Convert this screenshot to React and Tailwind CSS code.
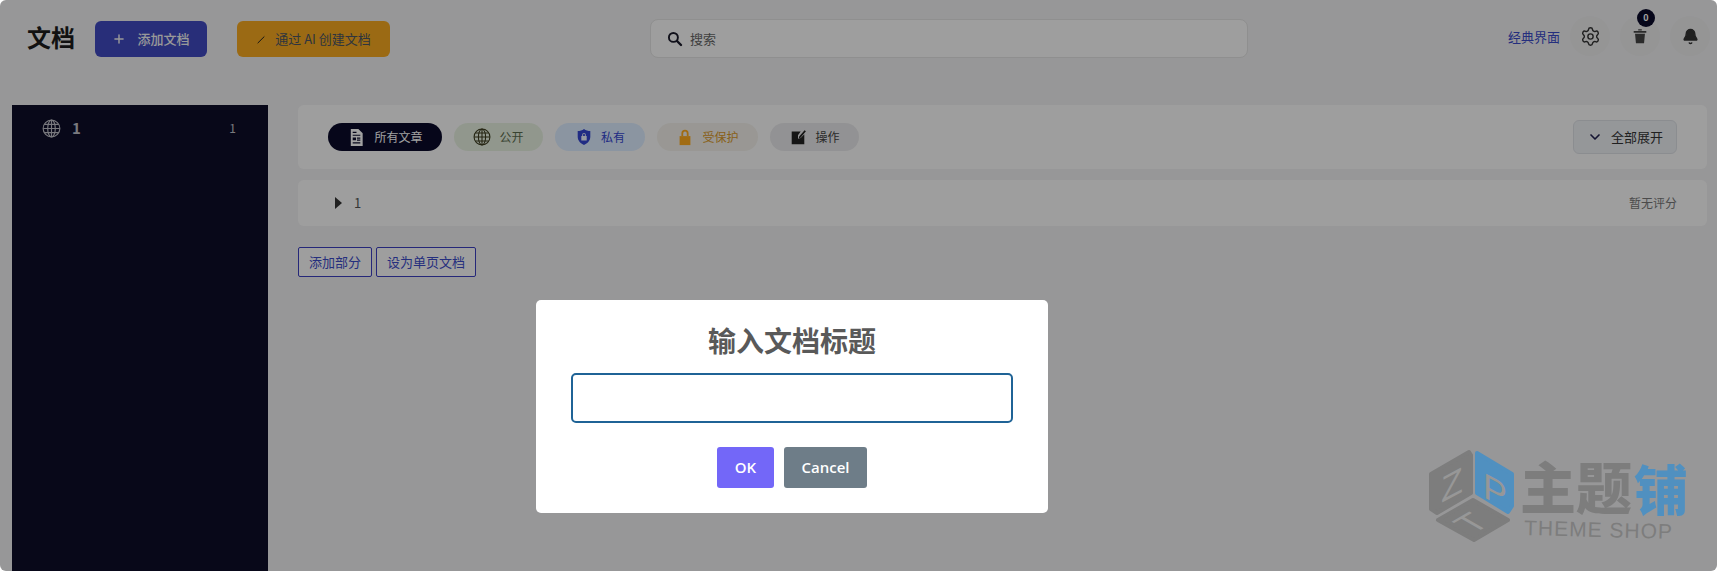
import { Bell, ChevronDown, Plus, Settings } from "lucide-react";

const Globe = ({ className }) => (
  <svg viewBox="0 0 20 20" fill="none" stroke="currentColor" strokeWidth="1.2" className={className}>
    <circle cx="10" cy="10" r="8.8" />
    <ellipse cx="10" cy="10" rx="4" ry="8.8" />
    <path d="M10 1.2v17.6M1.2 10h17.6M2.6 5.6h14.8M2.6 14.4h14.8" />
  </svg>
);

const Doc = ({ className }) => (
  <svg viewBox="0 0 20 20" fill="currentColor" className={className}>
    <path d="M4 1h8l4.5 4.5V19H4z" />
    <path d="M6 7h8v1.2H6zM6 10h3.5v3H6zM10.5 10H14v1.2h-3.5zM10.5 12.2H14v1.2h-3.5zM6 15h8v1.2H6zM6 4h4v1.2H6z" fill="#0a0a2a" />
  </svg>
);

const Shield = ({ className }) => (
  <svg viewBox="0 0 20 20" fill="currentColor" className={className}>
    <path d="M10 1c2 1.600 4.500 2.400 7 2.400v6.400c0 4.200-3 7.400-7 9.200-4-1.800-7-5-7-9.200V3.400c2.500 0 5-.8 7-2.400z" />
    <path d="M7 9h6v5H7zM8 9V7.500a2 2 0 0 1 4 0V9h-1V7.500a1 1 0 0 0-2 0V9z" fill="#f0f4ff" />
  </svg>
);

const Lock = ({ className }) => (
  <svg viewBox="0 0 20 20" fill="currentColor" className={className}>
    <path d="M4 9h12v10H4z" />
    <path fillRule="evenodd" d="M6 9V6a4 4 0 0 1 8 0v3h-2V6a2 2 0 0 0-4 0v3z" />
  </svg>
);

const EditPage = ({ className }) => (
  <svg viewBox="0 0 20 20" fill="currentColor" className={className}>
    <path d="M3 4h10l-3 4v4l3-1 4-4v11H3z" />
    <path d="M12 11l-1 .4.300-2 6-7 1.500 1.300-6 7z" />
  </svg>
);

const SearchIcon = ({ className }) => (
  <svg viewBox="0 0 20 20" fill="none" stroke="currentColor" className={className}>
    <circle cx="8" cy="8" r="5.600" strokeWidth="2.400" />
    <path d="M12.500 12.500l5 5" strokeWidth="3" strokeLinecap="round" />
  </svg>
);

const TrashIcon = ({ className }) => (
  <svg viewBox="0 0 20 20" fill="currentColor" className={className}>
    <path d="M3 4.500h14v1.800H3zM8 2.500h4v1.500H8zM4.500 7.500h11L14.500 18h-9z" />
  </svg>
);

const Pill = ({ icon, label, className }) => (
  <div className={`flex h-[28px] items-center justify-center gap-[8px] rounded-full text-[12px] ${className}`}>
    {icon}
    <span>{label}</span>
  </div>
);

const RoundBtn = ({ children }) => (
  <div className="relative flex h-[40px] w-[40px] items-center justify-center rounded-full bg-[#ececed]">
    {children}
  </div>
);

const Logo = () => (
  <svg viewBox="0 0 270 100" className="h-[100px] w-[270px]" style={{ fontFamily: '"Liberation Sans", "Noto Sans CJK SC", sans-serif' }}>
    <g strokeWidth="4" strokeLinejoin="round">
      <path d="M40 5L2 27v35l6 4 34-20V8z" fill="#7d7d7d" stroke="#7d7d7d" />
      <path d="M48 6l35 21v32l-4 6-31-19z" fill="#5090c0" stroke="#5090c0" />
      <path d="M9 73l35-20 35 20-34 20z" fill="#7d7d7d" stroke="#7d7d7d" />
    </g>
    <text transform="translate(12 56) skewY(-28)" fontSize="36" fill="#979797">Z</text>
    <text transform="translate(54 50) skewY(28)" fontSize="36" fill="#979797">P</text>
    <text transform="matrix(.87 -.5 .87 .5 53 82)" textAnchor="middle" fontSize="36" fill="#979797">T</text>
    <text x="91" y="62" fontSize="56" fontWeight="900" fill="#7d7d7d" fontFamily='"Noto Sans CJK SC", sans-serif'>主题</text>
    <text x="205" y="64" fontSize="54" fontWeight="900" fill="#5090c0" fontFamily='"Noto Sans CJK SC", sans-serif'>铺</text>
    <text x="95" y="88" fontSize="21" letterSpacing="1" fill="#7d7d7d" transform="rotate(1.500 95 88)">THEME SHOP</text>
  </svg>
);

export default function App() {
  return (
    <div className="relative h-[571px] w-[1717px] overflow-hidden rounded-[6px] bg-[#f0f0f1] font-['Noto_Sans_CJK_SC','Liberation_Sans',sans-serif] text-[13px] text-[#444]">
      {/* page header */}
      <div className="flex h-[105px] items-start pl-[27px] pr-[7px]">
        <h1 className="mt-[20px] w-[46px] whitespace-nowrap text-[24px] font-bold leading-[34px] text-[#1c1c1c]">文档</h1>
        <div className="ml-[22px] mt-[21px] flex h-[36px] w-[112px] items-center justify-center gap-[11px] rounded-[6px] bg-[#4049c0] text-[13px] font-medium text-[#f2f2f2]">
          <Plus className="h-[14px] w-[14px]" strokeWidth={2.5} />
          <span>添加文档</span>
        </div>
        <div className="ml-[30px] mt-[21px] flex h-[36px] w-[153px] items-center justify-center gap-[9px] rounded-[6px] bg-[#f5a820] text-[13px] text-[#4b5563]">
          <svg viewBox="0 0 12 12" className="h-[10px] w-[10px]" stroke="#222" strokeWidth="1.200">
            <path d="M2 11L10 3" />
          </svg>
          <span>通过 AI 创建文档</span>
        </div>
        <div className="ml-[260px] mt-[19px] flex h-[39px] w-[598px] items-center gap-[7px] rounded-[8px] border border-[#e2e2e2] bg-[#fafafa] pl-[16px] text-[13px] text-[#666]">
          <SearchIcon className="h-[16px] w-[16px] text-[#1a1a2a]" />
          <span>搜索</span>
        </div>
        <span className="ml-auto mt-[27px] text-[13px] leading-[20px] text-[#3b4bc8]">经典界面</span>
        <div className="ml-[10px] mt-[16px] flex gap-[10px]">
          <RoundBtn>
            <Settings className="h-[21px] w-[21px] text-[#333]" strokeWidth={1.6} />
          </RoundBtn>
          <RoundBtn>
            <TrashIcon className="h-[18px] w-[18px] text-[#444]" />
            <span className="absolute -top-[7px] left-[17px] flex h-[18px] w-[18px] items-center justify-center rounded-full bg-[#0a0a2a] text-[9px] font-bold text-white">0</span>
          </RoundBtn>
          <RoundBtn>
            <Bell className="h-[17px] w-[17px] text-[#333]" fill="currentColor" />
          </RoundBtn>
        </div>
      </div>

      {/* body */}
      <div className="flex h-[466px] pl-[12px] pr-[10px]">
        <aside className="w-[256px] bg-[#0e0e28] pl-[30px] pr-[32px] pt-[13px]">
          <div className="flex h-[20px] items-center text-[#c0c0c8]">
            <Globe className="h-[19px] w-[19px]" />
            <span className="ml-[11px] text-[15px] font-bold">1</span>
            <span className="ml-auto text-[12px]">1</span>
          </div>
        </aside>

        <main className="ml-[30px] flex-1">
          <div className="flex h-[64px] items-center rounded-[6px] bg-[#fbfbfb] pl-[30px] pr-[30px]">
            <div className="flex gap-[12px]">
              <Pill icon={<Doc className="h-[19px] w-[19px]" />} label="所有文章" className="w-[114px] bg-[#0a0a2a] text-white" />
              <Pill icon={<Globe className="h-[18px] w-[18px] text-[#3a3a1c]" />} label="公开" className="w-[89px] bg-[#e6f0e0] text-[#5b6b4f]" />
              <Pill icon={<Shield className="h-[18px] w-[18px] text-[#3546d1]" />} label="私有" className="w-[90px] bg-[#dcecff] text-[#3546d1]" />
              <Pill icon={<Lock className="h-[18px] w-[18px] text-[#ffab1f]" />} label="受保护" className="w-[101px] bg-[#f2f0ea] text-[#d9982a]" />
              <Pill icon={<EditPage className="h-[18px] w-[18px] text-[#222]" />} label="操作" className="w-[89px] bg-[#e8e8ea] text-[#444]" />
            </div>
            <div className="ml-auto flex h-[34px] w-[104px] items-center justify-center gap-[8px] rounded-[6px] border border-[#dde0e5] bg-[#eceff3] text-[13px] text-[#333]">
              <ChevronDown className="h-[16px] w-[16px] text-[#222250]" strokeWidth={2.5} />
              <span>全部展开</span>
            </div>
          </div>

          <div className="mt-[11px] flex h-[46px] items-center rounded-[6px] bg-[#fbfbfb] pl-[37px] pr-[30px]">
            <span className="h-0 w-0 border-y-[6px] border-l-[7px] border-y-transparent border-l-[#333]" />
            <span className="ml-[12px] text-[13px] text-[#555]">1</span>
            <span className="ml-auto text-[12px] text-[#777]">暂无评分</span>
          </div>

          <div className="mt-[21px] flex gap-[4px]">
            <div className="flex h-[30px] w-[74px] items-center justify-center rounded-[2px] border border-[#3b3fc0] bg-[#fafafa] text-[13px] text-[#3b4bc8]">添加部分</div>
            <div className="flex h-[30px] w-[100px] items-center justify-center rounded-[2px] border border-[#3b3fc0] bg-[#fafafa] text-[13px] text-[#3b4bc8]">设为单页文档</div>
          </div>
        </main>
      </div>

      {/* backdrop + dialog */}
      <div className="absolute inset-0 bg-black/[.37] pl-[536px] pt-[300px]">
        <div className="h-[213px] w-[512px] rounded-[5px] bg-white px-[35px] pt-[20px]">
          <h2 className="text-center text-[28px] font-bold leading-[40px] text-[#595959]">输入文档标题</h2>
          <div className="mt-[13px] h-[50px] w-[442px] rounded-[5px] border-2 border-[#1f6396] bg-white" />
          <div className="mt-[24px] flex justify-center gap-[10px] font-['Open_Sans','Liberation_Sans',sans-serif] text-[15px] font-semibold text-white">
            <div className="flex h-[41px] w-[57px] items-center justify-center rounded-[3px] bg-[#7367f8]">OK</div>
            <div className="flex h-[41px] w-[83px] items-center justify-center rounded-[3px] bg-[#6e7d88]">Cancel</div>
          </div>
        </div>
      </div>

      {/* watermark */}
      <div className="absolute left-[1429px] top-[447px]">
        <Logo />
      </div>
    </div>
  );
}
